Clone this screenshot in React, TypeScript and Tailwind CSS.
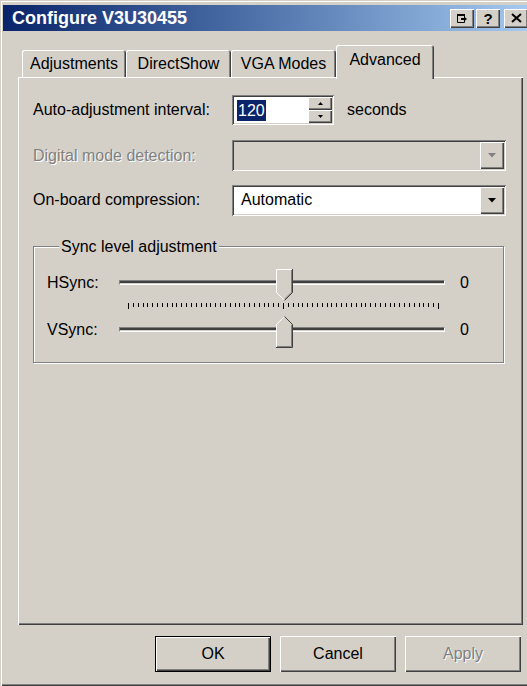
import React from "react";

// Classic 3D edge styles for the Windows 2000 look
const raised =
  "shadow-[inset_1px_1px_0_#fff,inset_-1px_-1px_0_#404040,inset_-2px_-2px_0_#808080]";
const sunken =
  "shadow-[inset_1px_1px_0_#808080,inset_-1px_-1px_0_#fff,inset_2px_2px_0_#404040,inset_-2px_-2px_0_#d4d0c8]";

function CaptionButton({ children, className }: { children: React.ReactNode; className?: string }) {
  return (
    <div
      className={`w-[24px] h-[19px] bg-[#d4d0c8] flex items-center justify-center ${raised} ${className ?? ""}`}
    >
      {children}
    </div>
  );
}

function TitleBar() {
  return (
    <div className="h-[26px] flex items-center bg-gradient-to-r from-[#0a246a] to-[#a6caf0] pl-[9px] pr-[2px]">
      <span className="text-white font-bold text-[18px] leading-none">Configure V3U30455</span>
      <div className="ml-auto flex items-center">
        <CaptionButton>
          <svg width="12" height="11" viewBox="0 0 12 11">
            <path d="M1.5 1.5H8.5V9.5H1.5Z" fill="none" stroke="#000" />
            <rect x="1" y="1" width="8" height="2" fill="#000" />
            <path d="M5 6H8" stroke="#000" strokeWidth="2" />
            <path d="M8 3.5L11 6L8 8.5Z" fill="#000" />
          </svg>
        </CaptionButton>
        <CaptionButton className="ml-[2px]">
          <span className="font-bold text-[15px] leading-none text-black">?</span>
        </CaptionButton>
        <CaptionButton className="ml-[4px]">
          <svg width="11" height="10" viewBox="0 0 11 10">
            <path d="M1 1L10 9M10 1L1 9" stroke="#000" strokeWidth="2" />
          </svg>
        </CaptionButton>
      </div>
    </div>
  );
}

function Tab({ label, width, selected }: { label: string; width: string; selected?: boolean }) {
  if (selected) {
    return (
      <div
        className={`relative z-10 -mb-[2px] h-[34px] ${width} bg-[#d4d0c8] rounded-tr-[3px] rounded-tl-[2px] shadow-[inset_1px_1px_0_#fff,inset_-1px_0_0_#404040,inset_-2px_0_0_#808080] flex justify-center pt-[6px]`}
      >
        <span className="leading-[18px]">{label}</span>
      </div>
    );
  }
  return (
    <div
      className={`h-[27px] ${width} bg-[#d4d0c8] rounded-tr-[3px] rounded-tl-[2px] shadow-[inset_1px_1px_0_#fff,inset_-1px_0_0_#404040,inset_-2px_0_0_#808080] flex justify-center pt-[5px]`}
    >
      <span className="leading-[18px]">{label}</span>
    </div>
  );
}

function Arrow({ color = "#000" }: { color?: string }) {
  return (
    <svg width="8" height="5" viewBox="0 0 8 5">
      <path d="M0 0H8L4 4.5Z" fill={color} />
    </svg>
  );
}

function SpinBox() {
  return (
    <div className={`w-[102px] h-[30px] bg-white flex items-center pl-[5px] pr-[2px] ${sunken}`}>
      <span className="bg-[#0a246a] text-white h-[21px] leading-[21px] px-[1px]">120</span>
      <div className="ml-auto w-[24px] h-[26px] flex flex-col">
        <div className={`h-[13px] bg-[#d4d0c8] flex items-center justify-center ${raised}`}>
          <svg width="5" height="3" viewBox="0 0 5 3">
            <path d="M2.5 0L5 3H0Z" fill="#000" />
          </svg>
        </div>
        <div className={`h-[13px] bg-[#d4d0c8] flex items-center justify-center ${raised}`}>
          <svg width="5" height="3" viewBox="0 0 5 3">
            <path d="M0 0H5L2.5 3Z" fill="#000" />
          </svg>
        </div>
      </div>
    </div>
  );
}

function ComboBox({ value, disabled }: { value?: string; disabled?: boolean }) {
  return (
    <div
      className={`w-[274px] h-[31px] p-[2px] flex items-center ${disabled ? "bg-[#d4d0c8]" : "bg-white"} ${sunken}`}
    >
      <span className="flex-1 pl-[7px]">{value}</span>
      <div className={`w-[24px] h-full bg-[#d4d0c8] flex items-center justify-center ${raised}`}>
        <Arrow color={disabled ? "#808080" : "#000"} />
      </div>
    </div>
  );
}

function ThumbDown() {
  return (
    <svg width="17" height="32" viewBox="0 0 17 32" className="block">
      <path d="M0 0H17V23.5L8.5 32L0 23.5Z" fill="#d4d0c8" />
      <path d="M0.5 23.5V0.5H16" fill="none" stroke="#fff" />
      <path d="M0.5 23.5L8.5 31.5" fill="none" stroke="#fff" />
      <path d="M16.5 0V23.5L8.5 31.5" fill="none" stroke="#404040" />
      <path d="M15.5 1V23.2L8.5 30.2" fill="none" stroke="#808080" />
    </svg>
  );
}

function ThumbUp() {
  return (
    <svg width="17" height="32" viewBox="0 0 17 32" className="block">
      <path d="M8.5 0L17 8.5V32H0V8.5Z" fill="#d4d0c8" />
      <path d="M0.5 31V8.5L8.5 0.5" fill="none" stroke="#fff" />
      <path d="M8.5 0.5L16.5 8.5V31.5H0" fill="none" stroke="#404040" />
      <path d="M15.5 8.8V30.5H1" fill="none" stroke="#808080" />
    </svg>
  );
}

function SliderRow({ label, up }: { label: string; up?: boolean }) {
  return (
    <div className="flex items-start h-[32px]">
      <span className="w-[72px] leading-[27px]">{label}</span>
      <div className="relative w-[326px] h-[32px]">
        <div className="mt-[11px] h-[5px] bg-[#d4d0c8] border-t border-l border-[#808080] border-b border-r border-b-white border-r-white shadow-[inset_0_2px_0_#404040]" />
        <div className="absolute left-[157px] top-0">{up ? <ThumbUp /> : <ThumbDown />}</div>
      </div>
      <span className="ml-[15px] leading-[27px]">0</span>
    </div>
  );
}

function Ticks() {
  const count = 64;
  const xs = Array.from({ length: count + 1 }, (_, i) => Math.round(9 + (i * 310) / count) + 0.5);
  return (
    <div className="h-[15px] flex">
      <div className="w-[72px]" />
      <svg width="326" height="15" viewBox="0 0 326 15" className="block">
        {xs.map((x, i) => {
          const long = i === 0 || i === count || i === count / 2;
          return <line key={i} x1={x} x2={x} y1={2} y2={long ? 8 : 6} stroke="#000" />;
        })}
      </svg>
    </div>
  );
}

function PushButton({ label, isDefault, disabled }: { label: string; isDefault?: boolean; disabled?: boolean }) {
  return (
    <div
      className={`w-[116px] h-[36px] flex items-center justify-center bg-[#d4d0c8] ${
        isDefault
          ? "border border-black shadow-[inset_1px_1px_0_#fff,inset_-1px_-1px_0_#404040,inset_-2px_-2px_0_#808080]"
          : raised
      }`}
    >
      <span className={disabled ? "text-[#808080] [text-shadow:1px_1px_0_#fff]" : ""}>{label}</span>
    </div>
  );
}

export default function App() {
  return (
    <div className="w-[527px] h-[686px] overflow-hidden bg-[#d4d0c8] font-['Liberation_Sans',Arial,sans-serif] text-[16px] text-black leading-none">
      <div className="w-[533px] h-[686px] flex flex-col pt-[5px] px-[3px] shadow-[inset_1px_1px_0_#d4d0c8,inset_2px_2px_0_#fff,inset_-1px_-1px_0_#404040,inset_-2px_-2px_0_#808080]">
        <TitleBar />
        <div className="ml-[15px] w-[505px] flex flex-col">
          <div className="h-[46px] flex items-end pl-[4px]">
            <Tab label="Adjustments" width="w-[104px]" />
            <Tab label="DirectShow" width="w-[105px]" />
            <Tab label="VGA Modes" width="w-[105px]" />
            <Tab label="Advanced" width="w-[98px]" selected />
          </div>

          <div className="h-[548px] bg-[#d4d0c8] shadow-[inset_1px_1px_0_#fff,inset_-1px_-1px_0_#404040,inset_-2px_-2px_0_#808080] pt-[18px] pl-[15px] flex flex-col">
            <div className="flex items-center h-[30px]">
              <span className="w-[199px]">Auto-adjustment interval:</span>
              <SpinBox />
              <span className="ml-[13px]">seconds</span>
            </div>

            <div className="mt-[15px] flex items-center h-[31px]">
              <span className="w-[199px] text-[#808080] [text-shadow:1px_1px_0_#fff]">
                Digital mode detection:
              </span>
              <ComboBox disabled />
            </div>

            <div className="mt-[14px] flex items-center h-[30px]">
              <span className="w-[199px]">On-board compression:</span>
              <ComboBox value="Automatic" />
            </div>

            <fieldset className="mt-[22px] w-[471px] border border-[#808080] shadow-[inset_1px_1px_0_#fff,1px_1px_0_#fff] pl-[13px] pt-[13px] pb-[14px]">
              <legend className="ml-[12px] px-[2px] leading-[19px] bg-[#d4d0c8]">Sync level adjustment</legend>
              <SliderRow label="HSync:" />
              <Ticks />
              <SliderRow label="VSync:" up />
            </fieldset>
          </div>

          <div className="mt-[11px] flex justify-end gap-[9px] pr-[2px]">
            <PushButton label="OK" isDefault />
            <PushButton label="Cancel" />
            <PushButton label="Apply" disabled />
          </div>
        </div>
      </div>
    </div>
  );
}
